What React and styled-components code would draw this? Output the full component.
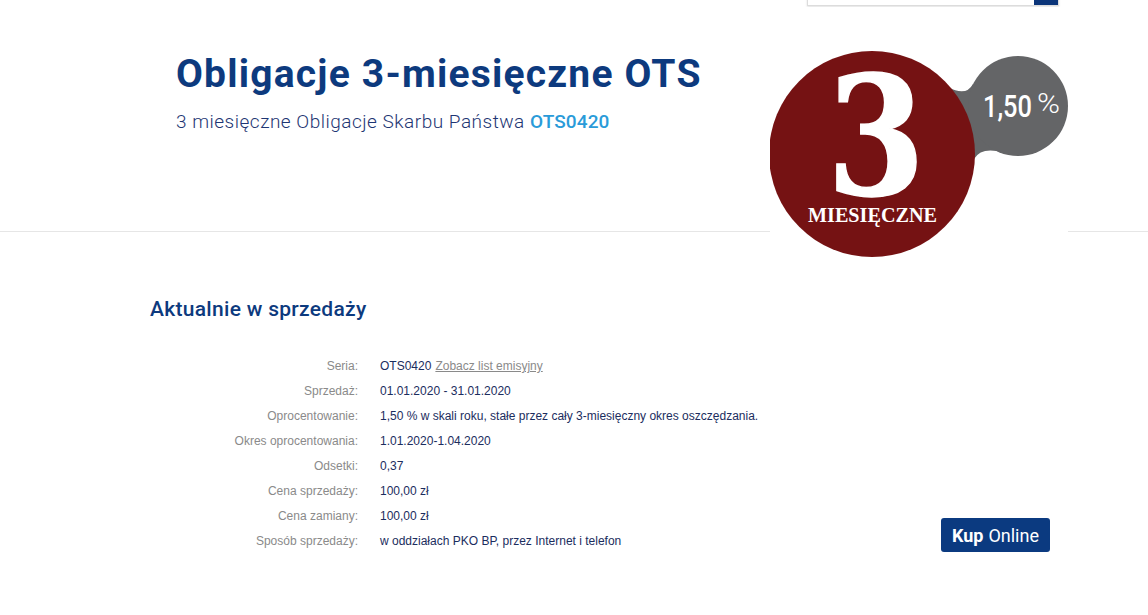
import React from 'react';
import styled, { createGlobalStyle } from 'styled-components';

const GlobalStyle = createGlobalStyle`
  html, body {
    margin: 0;
    padding: 0;
    background: #fff;
  }
  body {
    font-family: Roboto, "Liberation Sans", sans-serif;
  }
`;

const Page = styled.div`
  width: 1148px;
  overflow: hidden;
`;

const TopStrip = styled.div`
  height: 7px;
  overflow: hidden;
  display: flex;
  justify-content: flex-end;
  align-items: flex-end;
  padding-right: 89px;
`;

const SearchBox = styled.div`
  display: flex;
  width: 250px;
  height: 30px;
  margin-bottom: 1px;
  border: 1px solid #dcdcdc;
  box-shadow: 0 1px 2px rgba(0, 0, 0, 0.12);
  background: #fff;
`;

const SearchField = styled.div`
  flex: 1;
`;

const SearchButton = styled.div`
  width: 24px;
  background: #0b3579;
`;

const Hero = styled.header`
  position: relative;
  height: 225px;
  border-bottom: 1px solid #e6e6e6;
  padding: 44px 0 0 176px;
  box-sizing: border-box;
`;

const Title = styled.h1`
  margin: 0;
  font-family: Roboto, "Liberation Sans", sans-serif;
  font-weight: 700;
  font-size: 39px;
  letter-spacing: 1.2px;
  color: #0d3a7e;
`;

const Subtitle = styled.p`
  margin: 13px 0 0;
  font-size: 19px;
  font-weight: 300;
  letter-spacing: 0.5px;
  color: #1e3673;
`;

const Code = styled.span`
  color: #2a9bd9;
  font-weight: 500;
  letter-spacing: 0.1px;
`;

const BadgeWrap = styled.div`
  position: absolute;
  left: 770px;
  top: 44px;
  width: 298px;
  height: 208px;
  background: #fff;
`;

const Sale = styled.section`
  padding: 65px 98px 0 150px;
`;

const SectionTitle = styled.h2`
  margin: 0;
  font-size: 21px;
  font-weight: 500;
  color: #0d3a7e;
  letter-spacing: 0.3px;
`;

const Details = styled.div`
  display: flex;
  justify-content: space-between;
  align-items: flex-end;
  margin-top: 33px;
`;

const Table = styled.dl`
  display: grid;
  grid-template-columns: 208px auto;
  column-gap: 22px;
  margin: 0;
  font-family: Tahoma, "Liberation Sans", sans-serif;
  font-size: 12px;
`;

const Label = styled.dt`
  text-align: right;
  color: #8a8a8a;
  line-height: 25px;
`;

const Value = styled.dd`
  margin: 0;
  color: #1b2d5e;
  line-height: 25px;
`;

const DocLink = styled.a`
  color: #8a8a8a;
  text-decoration: underline;
  margin-left: 4px;
`;

const BuyButton = styled.a`
  display: inline-flex;
  align-items: center;
  gap: 5px;
  height: 34px;
  padding: 0 11px;
  margin-bottom: 2px;
  background: #0b3a80;
  border-radius: 3px;
  color: #fff;
  font-size: 18px;
  text-decoration: none;
  b {
    font-weight: 700;
  }
`;

const Badge = () => (
  <svg width="298" height="208" viewBox="0 0 298 208">
    <path d="M178 36 Q196 46 203 33 L234 102 Q212 95 204 108 Z" fill="#646567" />
    <circle cx="248" cy="55" r="50" fill="#646567" />
    <circle cx="102" cy="103" r="103" fill="#751213" />
    <text
      x="106"
      y="144"
      textAnchor="middle"
      fill="#fff"
      stroke="#fff"
      strokeWidth="1.5"
      fontFamily="'DejaVu Serif', serif"
      fontWeight="700"
      fontSize="164"
      transform="translate(106 0) scale(0.86 1) translate(-106 0)"
    >
      3
    </text>
    <text
      x="38"
      y="171"
      fill="#fff"
      fontFamily="'Liberation Serif', 'DejaVu Serif', serif"
      fontWeight="700"
      fontSize="21"
      textLength="129"
      lengthAdjust="spacingAndGlyphs"
    >
      MIESIĘCZNE
    </text>
    <text
      x="213"
      y="66"
      fill="#fff"
      fontFamily="Roboto, 'Liberation Sans', sans-serif"
      fontWeight="500"
      fontSize="31"
      textLength="49"
      lengthAdjust="spacingAndGlyphs"
    >
      1,50
    </text>
    <text
      x="267"
      y="62"
      fill="#fff"
      fontFamily="Roboto, 'Liberation Sans', sans-serif"
      fontWeight="300"
      fontSize="28"
      textLength="23"
      lengthAdjust="spacingAndGlyphs"
    >
      %
    </text>
  </svg>
);

const rows = [
  ['Seria:', 'series'],
  ['Sprzedaż:', '01.01.2020 - 31.01.2020'],
  ['Oprocentowanie:', '1,50 % w skali roku, stałe przez cały 3-miesięczny okres oszczędzania.'],
  ['Okres oprocentowania:', '1.01.2020-1.04.2020'],
  ['Odsetki:', '0,37'],
  ['Cena sprzedaży:', '100,00 zł'],
  ['Cena zamiany:', '100,00 zł'],
  ['Sposób sprzedaży:', 'w oddziałach PKO BP, przez Internet i telefon'],
];

export default function App() {
  return (
    <Page>
      <GlobalStyle />
      <TopStrip>
        <SearchBox>
          <SearchField />
          <SearchButton />
        </SearchBox>
      </TopStrip>
      <Hero>
        <Title>Obligacje 3-miesięczne OTS</Title>
        <Subtitle>
          3 miesięczne Obligacje Skarbu Państwa <Code>OTS0420</Code>
        </Subtitle>
        <BadgeWrap>
          <Badge />
        </BadgeWrap>
      </Hero>
      <Sale>
        <SectionTitle>Aktualnie w sprzedaży</SectionTitle>
        <Details>
          <Table>
            {rows.map(([label, value]) => (
              <React.Fragment key={label}>
                <Label>{label}</Label>
                <Value>
                  {value === 'series' ? (
                    <>
                      OTS0420<DocLink href="#">Zobacz list emisyjny</DocLink>
                    </>
                  ) : (
                    value
                  )}
                </Value>
              </React.Fragment>
            ))}
          </Table>
          <BuyButton href="#">
            <b>Kup</b> Online
          </BuyButton>
        </Details>
      </Sale>
    </Page>
  );
}
